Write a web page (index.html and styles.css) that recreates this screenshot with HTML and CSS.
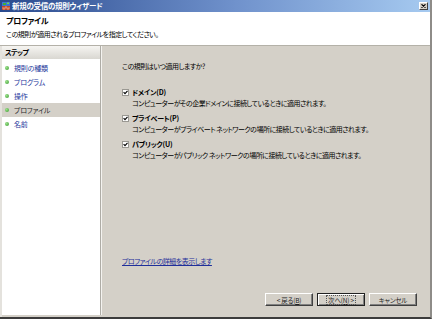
FILE: index.html
```html
<!DOCTYPE html>
<html lang="ja">
<head>
<meta charset="utf-8">
<title>新規の受信の規則ウィザード</title>
<link rel="stylesheet" href="styles.css">
</head>
<body>
<div class="window">
  <div class="titlebar">
    <svg class="app-icon" width="8" height="8" viewBox="0 0 8 8">
      <rect x="0" y="0" width="8" height="4" fill="#3b73d6"/>
      <path d="M1 1 h3 v2 h-3z" fill="#3fae3a"/>
      <path d="M5 0.5 h2 v1.5 h-2z" fill="#6fd05a"/>
      <rect x="0" y="4" width="8" height="4" fill="#c0452a"/>
      <path d="M0 6 h8 M4 4 v2 M2 6 v2 M6 6 v2" stroke="#f2d0b0" stroke-width="0.6"/>
    </svg>
    <span class="title">新規の受信の規則ウィザード</span>
    <span class="close">
      <svg width="5" height="4" viewBox="0 0 5 4"><path d="M0.5 0.3 L4.5 3.7 M4.5 0.3 L0.5 3.7" stroke="#000" stroke-width="1.1"/></svg>
    </span>
  </div>
  <div class="header">
    <div class="h-title">プロファイル</div>
    <div class="h-sub">この規則が適用されるプロファイルを指定してください。</div>
  </div>
  <div class="body">
    <div class="steps">
      <div class="steps-head">ステップ</div>
      <ul class="steps-list">
        <li class="step"><span class="dot"></span>規則の種類</li>
        <li class="step"><span class="dot"></span>プログラム</li>
        <li class="step"><span class="dot"></span>操作</li>
        <li class="step current"><span class="dot"></span>プロファイル</li>
        <li class="step"><span class="dot"></span>名前</li>
      </ul>
    </div>
    <div class="content">
      <div class="question">この規則はいつ適用しますか?</div>
      <div class="options">
        <div class="option">
          <div class="opt-row">
            <span class="check"><svg width="5" height="5" viewBox="0 0 5 5"><path d="M0.6 2.2 L2 3.7 L4.5 0.8" fill="none" stroke="#000" stroke-width="1.1"/></svg></span>
            <span class="opt-label">ドメイン(D)</span>
          </div>
          <div class="opt-desc">コンピューターがその企業ドメインに接続しているときに適用されます。</div>
        </div>
        <div class="option">
          <div class="opt-row">
            <span class="check"><svg width="5" height="5" viewBox="0 0 5 5"><path d="M0.6 2.2 L2 3.7 L4.5 0.8" fill="none" stroke="#000" stroke-width="1.1"/></svg></span>
            <span class="opt-label">プライベート(P)</span>
          </div>
          <div class="opt-desc">コンピューターがプライベート ネットワークの場所に接続しているときに適用されます。</div>
        </div>
        <div class="option">
          <div class="opt-row">
            <span class="check"><svg width="5" height="5" viewBox="0 0 5 5"><path d="M0.6 2.2 L2 3.7 L4.5 0.8" fill="none" stroke="#000" stroke-width="1.1"/></svg></span>
            <span class="opt-label">パブリック(U)</span>
          </div>
          <div class="opt-desc">コンピューターがパブリック ネットワークの場所に接続しているときに適用されます。</div>
        </div>
      </div>
      <a class="link" href="#">プロファイルの詳細を表示します</a>
      <div class="buttons">
        <span class="btn">&lt;&nbsp;戻る(<u>B</u>)</span>
        <span class="btn default"><span class="focus">次へ(<u>N</u>)&nbsp;&gt;</span></span>
        <span class="btn">キャンセル</span>
      </div>
    </div>
  </div>
</div>
</body>
</html>
```
FILE: styles.css
```css
html, body {
  margin: 0;
  padding: 0;
}
body {
  width: 432px;
  height: 319px;
  overflow: hidden;
  font-family: "Noto Sans CJK JP", "Noto Sans", sans-serif;
  font-feature-settings: "palt";
  font-size: 7px;
  letter-spacing: -0.5px;
  color: #111;
}
.window {
  width: 432px;
  height: 319px;
  box-sizing: border-box;
  display: flex;
  flex-direction: column;
  background: #d4d0c8;
  border-right: 2px solid #8e8c88;
  border-bottom: 2px solid #3c3c3c;
}
.titlebar {
  flex: none;
  height: 12px;
  display: flex;
  align-items: center;
  padding-left: 2px;
  background: linear-gradient(to right, #2a4a8e, #7092cc 55%, #a6caf0);
}
.app-icon {
  flex: none;
  margin-right: 2px;
}
.title {
  color: #fff;
  font-weight: bold;
  font-size: 7.5px;
  letter-spacing: -0.3px;
  line-height: 12px;
  white-space: nowrap;
}
.close {
  margin-left: auto;
  margin-right: 2px;
  width: 9px;
  height: 8px;
  box-sizing: border-box;
  background: #d4d0c8;
  border: 1px solid;
  border-color: #fff #404040 #404040 #fff;
  display: flex;
  align-items: center;
  justify-content: center;
}
.header {
  flex: none;
  height: 34px;
  box-sizing: border-box;
  padding: 3px 0 0 6px;
  background: #fff;
  border-bottom: 1px solid #b4b1a8;
}
.h-title {
  font-weight: bold;
  font-size: 8px;
  letter-spacing: -0.3px;
  line-height: 11px;
  color: #000;
}
.h-sub {
  margin-top: 3px;
  line-height: 10px;
  color: #000;
}
.body {
  flex: 1;
  min-height: 0;
  display: flex;
  border-left: 2px solid #e4e2dd;
}
.steps {
  flex: none;
  width: 98px;
  margin-bottom: 2px;
  background: #fff;
  border-right: 1px solid #aeaca6;
  box-shadow: 1px 0 0 #f4f3f0;
}
.steps-head {
  height: 13px;
  line-height: 13px;
  padding-left: 3px;
  font-weight: bold;
  color: #000;
  background: linear-gradient(#f6f5f2, #d9d7d1);
}
.steps-list {
  list-style: none;
  margin: 2px 0 0;
  padding: 0;
}
.step {
  height: 14px;
  display: flex;
  align-items: center;
  color: #25379c;
  letter-spacing: -0.2px;
  white-space: nowrap;
}
.step.current {
  background: #d4d0c8;
  color: #2a2a2a;
}
.dot {
  width: 4px;
  height: 4px;
  border-radius: 50%;
  background: radial-gradient(circle at 35% 35%, #9be28a, #3c9a32);
  margin: 0 5px 0 3px;
}
.content {
  flex: 1;
  min-width: 0;
  display: flex;
  flex-direction: column;
  padding: 15px 13px 11px 21px;
}
.question {
  line-height: 10px;
  color: #000;
}
.options {
  margin-top: 15px;
  display: flex;
  flex-direction: column;
  gap: 4px;
}
.opt-row {
  height: 12px;
  display: flex;
  align-items: center;
  gap: 3px;
}
.check {
  flex: none;
  width: 7px;
  height: 7px;
  box-sizing: border-box;
  background: #fff;
  border: 1px solid #9a9892;
  display: flex;
  align-items: center;
  justify-content: center;
}
.opt-label {
  font-weight: bold;
  letter-spacing: -0.2px;
  color: #000;
}
.opt-desc {
  line-height: 10px;
  padding-left: 10px;
  color: #000;
  white-space: nowrap;
}
.link {
  margin-top: auto;
  align-self: flex-start;
  line-height: 10px;
  color: #1f2f9a;
  text-decoration: underline;
}
.buttons {
  margin-top: 27px;
  display: flex;
  justify-content: flex-end;
  gap: 4px;
}
.btn {
  width: 48px;
  height: 13px;
  box-sizing: border-box;
  display: flex;
  align-items: center;
  justify-content: center;
  background: #d4d0c8;
  border: 1px solid;
  border-color: #fff #404040 #404040 #fff;
  box-shadow: inset -1px -1px 0 #808080;
  color: #222;
  font-size: 6.5px;
  letter-spacing: -0.2px;
  line-height: 8px;
  white-space: nowrap;
}
.btn.default {
  border: 1px solid #222;
  box-shadow: inset 1px 1px 0 #fff, inset -1px -1px 0 #808080;
}
.focus {
  outline: 1px dotted #555;
  outline-offset: 0;
  padding: 0 1px;
}
```
